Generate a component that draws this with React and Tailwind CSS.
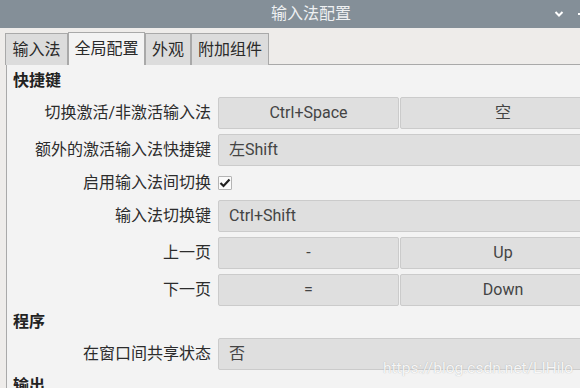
import React from "react";

const FONT = { fontFamily: 'Roboto, "Noto Sans CJK SC", sans-serif' };

function Tab({ label, width, active }) {
  return (
    <div
      className={`flex h-[32px] items-center justify-center border border-b-0 border-[#a9a9a9] text-[16px] text-[#2a2a2a] ${
        active ? "relative z-10 h-[33px] bg-[#f3f3f3]" : "bg-[#dcdcdc]"
      }`}
      style={{ width }}
    >
      {label}
    </div>
  );
}

function KeyButton({ children, className = "" }) {
  return (
    <div
      className={`flex h-[32px] items-center rounded-[2px] border border-[#cbcbcb] bg-[#dfdfdf] text-[16px] text-[#444] ${className}`}
    >
      {children}
    </div>
  );
}

function Row({ label, children }) {
  return (
    <div className="flex items-center">
      <div className="w-[205px] shrink-0 pr-[1px] text-right text-[16px] text-[#2c2c2c]">{label}</div>
      <div className="ml-[6px] flex gap-[1px]">{children}</div>
    </div>
  );
}

function Pair({ label, left, right }) {
  return (
    <Row label={label}>
      <KeyButton className="w-[181px] shrink-0 justify-center">{left}</KeyButton>
      <KeyButton className="w-[206px] shrink-0 justify-center">{right}</KeyButton>
    </Row>
  );
}

function Wide({ label, value }) {
  return (
    <Row label={label}>
      <KeyButton className="w-[388px] shrink-0 pl-[10px]">{value}</KeyButton>
    </Row>
  );
}

function Section({ title }) {
  return <div className="h-[22px] pl-[6px] text-[16px] font-bold leading-[22px] text-[#222]">{title}</div>;
}

export default function App() {
  return (
    <div className="relative h-[388px] w-[580px] overflow-hidden bg-[#eeecea]" style={FONT}>
      {/* title bar */}
      <div className="relative flex h-[28px] w-[622px] items-center justify-center bg-[#848f98] text-[16px] text-[#eef0f2]">
        输入法配置
        <svg className="absolute left-[554px] top-[10px]" width="10" height="8" viewBox="0 0 10 8">
          <path d="M1.5 2 L5 5.5 L8.5 2" fill="none" stroke="#fff" strokeWidth="2" />
        </svg>
        <div className="absolute left-[578px] top-[13px] h-[2px] w-[3px] bg-white" />
      </div>

      {/* tabs */}
      <div className="flex items-end pl-[5px] pt-[4px]">
        <Tab label="输入法" width={63} />
        <Tab label="全局配置" width={77} active />
        <Tab label="外观" width={46} />
        <Tab label="附加组件" width={78} />
      </div>

      {/* panel */}
      <div className="-mt-[1px] ml-[6px] flex flex-col gap-[5px] border-l border-t border-[#a9a9a9] bg-[#f3f3f3] pb-4 pt-[5px]">
        <Section title="快捷键" />
        <Pair label="切换激活/非激活输入法" left="Ctrl+Space" right="空" />
        <Wide label="额外的激活输入法快捷键" value="左Shift" />
        <Row label="启用输入法间切换">
          <div className="flex h-[22px] items-center">
            <div className="flex h-[14px] w-[14px] items-center justify-center rounded-[1px] border border-[#b4b4b4] bg-[#fafafa]">
              <svg width="12" height="10" viewBox="0 0 12 10">
                <path d="M1.5 5 L4.5 8 L10.5 1.5" fill="none" stroke="#1f1f1f" strokeWidth="2.2" />
              </svg>
            </div>
          </div>
        </Row>
        <Wide label="输入法切换键" value="Ctrl+Shift" />
        <Pair label="上一页" left="-" right="Up" />
        <Pair label="下一页" left="=" right="Down" />
        <Section title="程序" />
        <Wide label="在窗口间共享状态" value="否" />
        <Section title="输出" />
      </div>

      {/* watermark */}
      <div
        className="absolute left-[383px] top-[357px] text-[15.5px] text-white/90"
        style={{ textShadow: "0 0 1px rgba(120,120,120,0.6)" }}
      >
        https://blog.csdn.net/LIHilo
      </div>
    </div>
  );
}
